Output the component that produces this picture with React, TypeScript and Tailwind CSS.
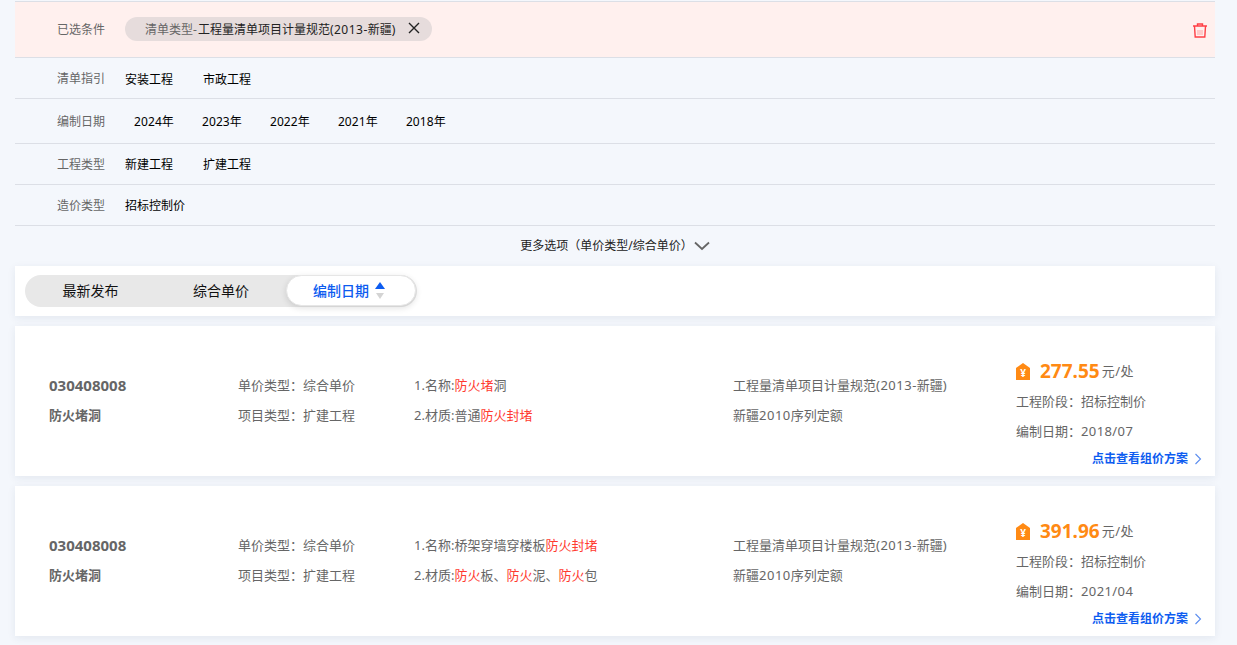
import React from "react";

const font = { fontFamily: '"Noto Sans", "Noto Sans CJK SC", sans-serif' };

function Red({ children }: { children: React.ReactNode }) {
  return <span className="text-[#ff3b30]">{children}</span>;
}

function FilterRow({ label, h, gap, pl, items, track, pt = "pt-[2px]" }: { label: string; h: string; gap: string; pl: string; items: string[]; track?: boolean; pt?: string }) {
  return (
    <div className={`flex items-center border-b border-[#dcdfe6] ${h}`}>
      <div className="w-[90px] shrink-0 pt-px text-right text-[12px] text-[#666666]">{label}</div>
      <div className={`flex text-[12px] text-black ${pt} ${gap} ${pl} ${track ? "tracking-[0.1px]" : ""}`}>
        {items.map((t) => (
          <span key={t}>{t}</span>
        ))}
      </div>
    </div>
  );
}

function Card({ line1, line2, price, date }: { line1: React.ReactNode; line2: React.ReactNode; price: string; date: string }) {
  return (
    <div className="relative flex h-[150px] items-center bg-white pb-[2px] pl-[34px] text-[13px] leading-[30px] text-[#666666] shadow-[0_2px_8px_rgba(30,50,90,0.08)]">
      <div className="w-[189px] shrink-0 font-bold">
        <div className="text-[15px]">030408008</div>
        <div>防火堵洞</div>
      </div>
      <div className="w-[176px] shrink-0">
        <div>单价类型：综合单价</div>
        <div>项目类型：扩建工程</div>
      </div>
      <div className="w-[319px] shrink-0">
        <div>{line1}</div>
        <div>{line2}</div>
      </div>
      <div className="w-[283px] shrink-0">
        <div>
          工程量清单项目计量规范<span className="tracking-[0.5px]">(2013-</span>新疆)
        </div>
        <div>
          新疆<span className="tracking-[0.5px]">2010</span>序列定额
        </div>
      </div>
      <div className="pt-[2px]">
        <div className="flex h-[30px] items-center">
          <svg width="14" height="17" viewBox="0 0 14 17" className="mr-[10px]">
            <path d="M0 5 L7 0 L14 5 V17 H0 Z" fill="#ff8a14" />
            <text x="7" y="14" textAnchor="middle" fontSize="10" fontWeight="700" fill="#fff">¥</text>
          </svg>
          <span className="text-[19px] font-bold text-[#ff8a14]">{price}</span>
          <span className="ml-[2px] tracking-[0.5px]">元/处</span>
        </div>
        <div>工程阶段：招标控制价</div>
        <div>
          编制日期：<span className="tracking-[0.4px]">{date}</span>
        </div>
      </div>
      <div className="absolute bottom-[7px] right-[13px] flex items-center text-[12px] font-bold leading-[20px] text-[#0d5cf0]">
        点击查看组价方案
        <svg width="8" height="12" viewBox="0 0 8 12" className="ml-[6px]" fill="none" stroke="#5b8def" strokeWidth="1.1">
          <path d="M1.5 1 L6.5 6 L1.5 11" />
        </svg>
      </div>
    </div>
  );
}

export default function App() {
  return (
    <div style={font} className="min-h-[645px] overflow-hidden bg-[#f4f7fc] pl-[15px] pt-px">
      <div className="w-[1200px]">
        <div className="flex h-[57px] items-center border-y border-[#dcdfe6] bg-[#fff0ee]">
          <div className="w-[90px] shrink-0 text-right text-[12px] text-[#666666]">已选条件</div>
          <div className="mb-px ml-[20px] flex h-[24px] w-[307px] items-center rounded-full bg-[#e6dcdc] pl-[20px] pt-px text-[12px] text-[#666666]">
            清单类型-<span className="ml-px text-[#222222]">工程量清单项目计量规范<span className="tracking-[0.5px]">(2013-</span>新疆)</span>
            <svg width="12" height="12" viewBox="0 0 12 12" className="mb-[3px] ml-[13px]" stroke="#222" strokeWidth="1.4">
              <path d="M1 1 L11 11 M11 1 L1 11" />
            </svg>
          </div>
          <svg width="16" height="16" viewBox="0 0 16 16" className="ml-auto mr-[7px]" fill="none" stroke="#ff3f45" strokeWidth="1.4">
            <path d="M1 4 H15 M5.5 4 V2 H10.5 V4 M2.5 4 L3.2 15 H12.8 L13.5 4" />
            <path d="M6 8 V13 M8 8 V13 M10 8 V13" strokeWidth="1" stroke="#ffa5a5" />
          </svg>
        </div>
        <FilterRow label="清单指引" h="h-[41px]" gap="gap-[30px]" pl="pl-[20px]" pt="pt-[4px]" items={["安装工程", "市政工程"]} />
        <FilterRow label="编制日期" h="h-[45px]" gap="gap-[28px]" pl="pl-[29px]" track items={["2024年", "2023年", "2022年", "2021年", "2018年"]} />
        <FilterRow label="工程类型" h="h-[41px]" gap="gap-[30px]" pl="pl-[20px]" items={["新建工程", "扩建工程"]} />
        <FilterRow label="造价类型" h="h-[41px]" gap="gap-[30px]" pl="pl-[20px]" items={["招标控制价"]} />

        <div className="flex h-[40px] items-center justify-center text-[12px] text-[#222222]">
          更多选项（单价类型/综合单价）
          <svg width="16" height="10" viewBox="0 0 16 10" className="ml-[1px]" fill="none" stroke="#666" strokeWidth="1.8">
            <path d="M1 1.5 L8 8 L15 1.5" />
          </svg>
        </div>

        <div className="flex h-[50px] items-center bg-white pl-[10px] shadow-[0_2px_8px_rgba(30,50,90,0.08)]">
          <div className="flex h-[32px] w-[392px] rounded-full bg-[#e8e8e8] text-[14px] leading-[32px] text-[#111111]">
            <div className="w-[131px] text-center">最新发布</div>
            <div className="w-[130px] text-center">综合单价</div>
            <div className="flex h-[31px] w-[130px] items-center justify-center rounded-full border border-[#e6e6e6] bg-white pr-[3px] font-medium text-[#0d5cf0] shadow-[0_2px_6px_rgba(0,0,0,0.12)]">
              编制日期
              <svg width="12" height="18" viewBox="0 0 12 18" className="ml-[5px]">
                <path d="M6 0 L11 7 H1 Z" fill="#0d5cf0" />
                <path d="M2 11 H10 L6 17 Z" fill="#d4d4d4" />
              </svg>
            </div>
          </div>
        </div>

        <div className="mt-[10px] flex flex-col gap-[10px]">
          <Card
            line1={<>1.名称:<Red>防火堵</Red>洞</>}
            line2={<>2.材质:普通<Red>防火封堵</Red></>}
            price="277.55"
            date="2018/07"
          />
          <Card
            line1={<>1.名称:桥架穿墙穿楼板<Red>防火封堵</Red></>}
            line2={<>2.材质:<Red>防火</Red>板、<Red>防火</Red>泥、<Red>防火</Red>包</>}
            price="391.96"
            date="2021/04"
          />
        </div>
      </div>
    </div>
  );
}
